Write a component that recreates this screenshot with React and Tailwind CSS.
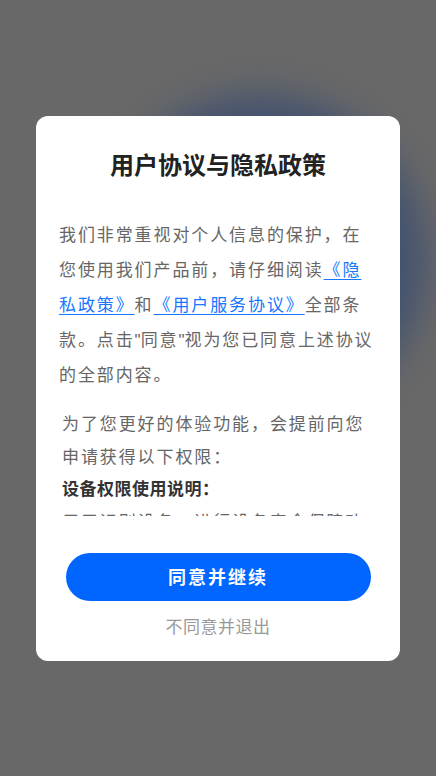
import React from "react";

export default function App() {
  const q = "font-['Liberation_Sans',sans-serif] tracking-[0px] leading-none";
  return (
    <div className="relative w-[436px] h-[776px] overflow-hidden bg-[#686868] flex items-center justify-center font-['Noto_Sans_CJK_SC','Noto_Sans',sans-serif]">
      <div className="absolute left-[95px] top-[95px] w-[330px] h-[330px] rounded-full bg-[#2a4375] opacity-60 blur-[18px]" />
      <div className="relative w-[364px] h-[545px] bg-white rounded-xl flex flex-col">
        <h1 className="pt-[32px] text-center text-[24px] leading-[32px] font-semibold text-[#222]">
          用户协议与隐私政策
        </h1>
        <div className="mt-[36px] h-[300px] overflow-hidden pl-[23px] pr-[21px] text-[17px] text-[#666]">
          <p className="leading-[35px] tracking-[1.9px]">
            我们非常重视对个人信息的保护，在您使用我们产品前，请仔细阅读
            <span className="text-[#1677ff] underline underline-offset-[3px]">《隐私政策》</span>
            和
            <span className="text-[#1677ff] underline underline-offset-[3px]">《用户服务协议》</span>
            全部条款。点击<span className={q}>"</span>同意<span className={q}>"</span>视为您已同意上述协议的全部内容。
          </p>
          <p className="mt-[15px] pl-[3px] leading-[33px] tracking-[1.9px]">
            为了您更好的体验功能，会提前向您申请获得以下权限：
          </p>
          <p className="pl-[3px] leading-[32px] tracking-[0.5px] font-bold text-[#333]">
            设备权限使用说明：
          </p>
          <p className="pl-[3px] leading-[33px] tracking-[1.9px]">
            用于识别设备，进行设备安全保障功能，保障您的账号安全。
          </p>
        </div>
        <button className="mx-auto mt-[37px] w-[305px] h-[48px] rounded-full bg-[#0066ff] text-white text-[18px] font-bold tracking-[2px]">
          同意并继续
        </button>
        <div className="mt-[13px] text-center text-[17px] leading-[24px] tracking-[0.5px] text-[#999]">
          不同意并退出
        </div>
      </div>
    </div>
  );
}
